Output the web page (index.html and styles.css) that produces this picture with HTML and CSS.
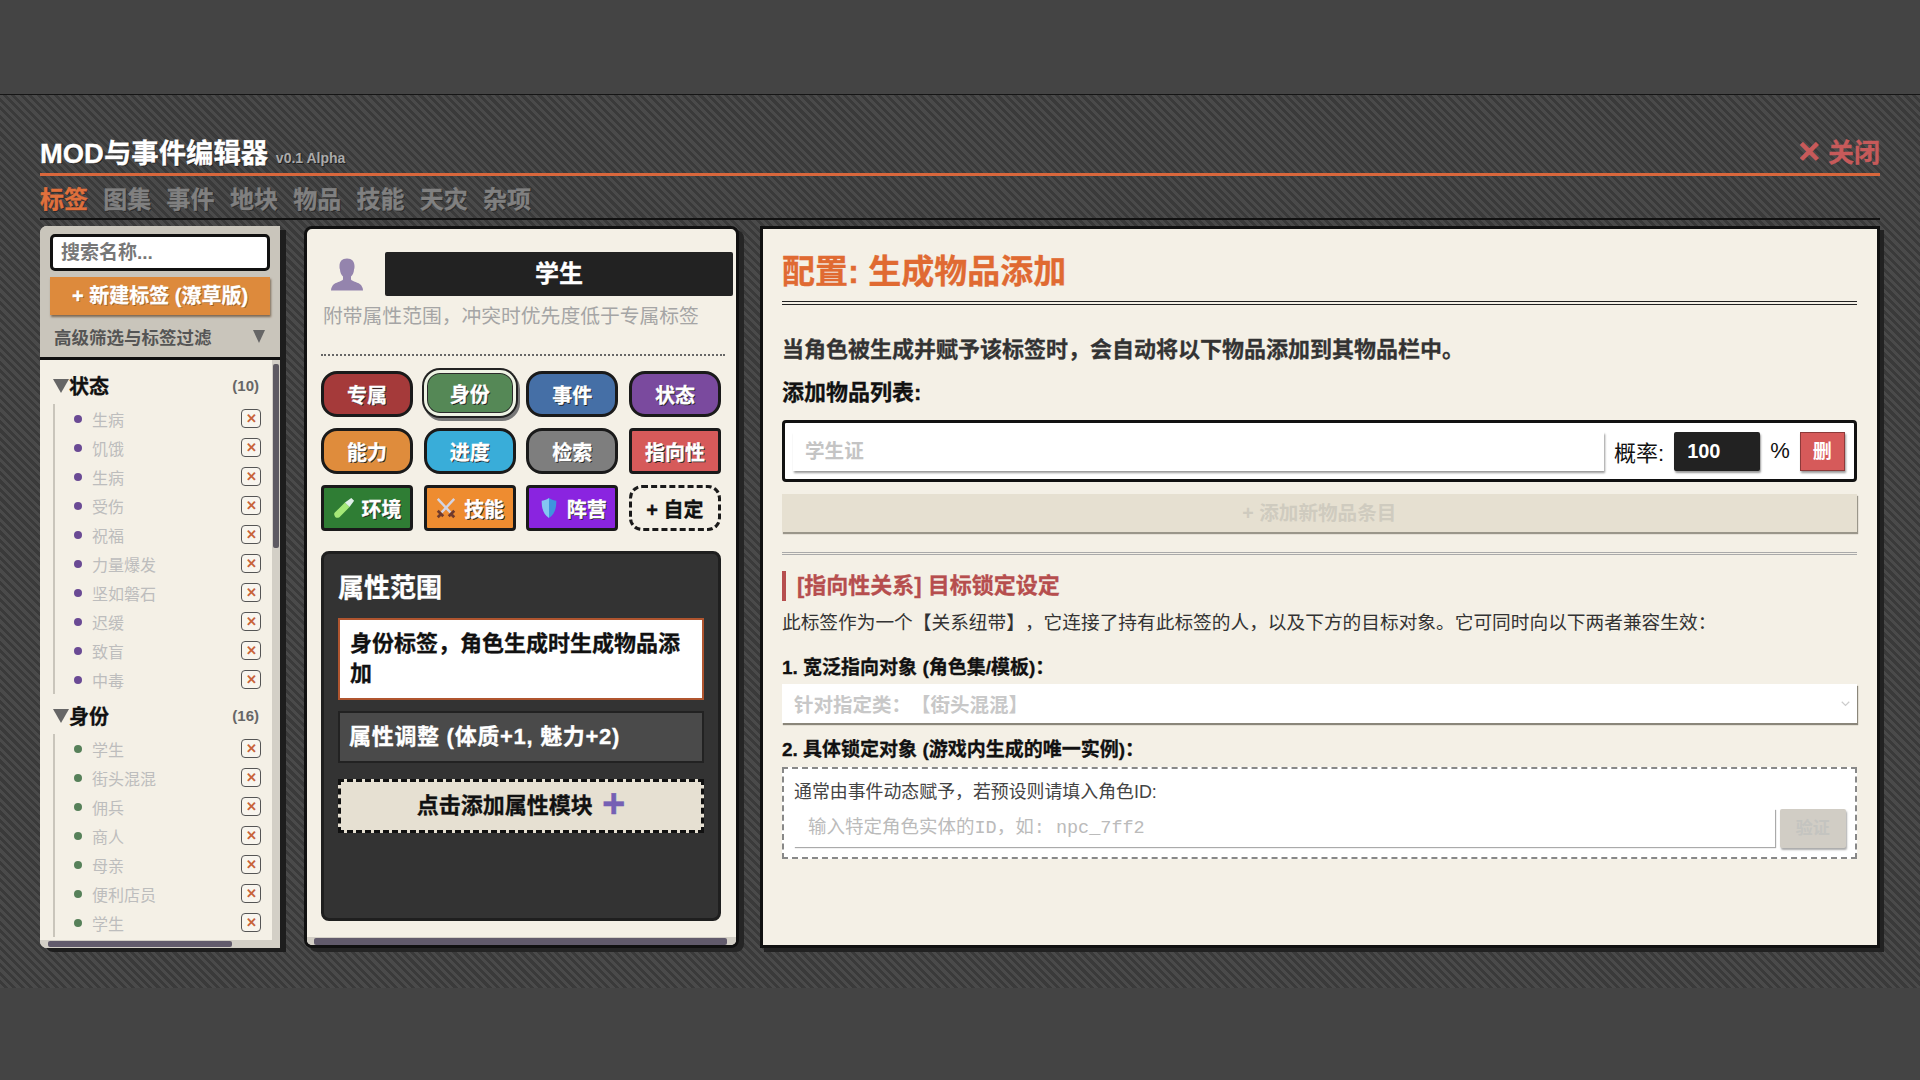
FILE: index.html
```html
<!DOCTYPE html>
<html lang="zh-CN">
<head>
<meta charset="UTF-8">
<title>MOD与事件编辑器</title>
<link rel="stylesheet" href="styles.css">
</head>
<body>

<div class="band-top"></div>

<div class="editor">
  <header class="editor-head">
    <h1 class="editor-title">MOD与事件编辑器 <small>v0.1 Alpha</small></h1>
    <span class="btn-exit"><span class="exit-x">✕</span> 关闭</span>
  </header>

  <nav class="tabs">
    <span class="tab tab-on">标签</span>
    <span class="tab">图集</span>
    <span class="tab">事件</span>
    <span class="tab">地块</span>
    <span class="tab">物品</span>
    <span class="tab">技能</span>
    <span class="tab">天灾</span>
    <span class="tab">杂项</span>
  </nav>

  <div class="workspace">

    <!-- tag list -->
    <aside class="side">
      <div class="side-top">
        <div class="search">搜索名称...</div>
        <div class="btn-new">+ 新建标签 (潦草版)</div>
        <div class="filter"><span>高级筛选与标签过滤</span><i class="filter-arrow"></i></div>
      </div>
      <div class="side-list">
        <div class="group-head"><i class="tri"></i><b>状态</b><em>(10)</em></div>
        <ul class="group dot-purple">
          <li><i></i><span>生病</span><u>✕</u></li>
          <li><i></i><span>饥饿</span><u>✕</u></li>
          <li><i></i><span>生病</span><u>✕</u></li>
          <li><i></i><span>受伤</span><u>✕</u></li>
          <li><i></i><span>祝福</span><u>✕</u></li>
          <li><i></i><span>力量爆发</span><u>✕</u></li>
          <li><i></i><span>坚如磐石</span><u>✕</u></li>
          <li><i></i><span>迟缓</span><u>✕</u></li>
          <li><i></i><span>致盲</span><u>✕</u></li>
          <li><i></i><span>中毒</span><u>✕</u></li>
        </ul>
        <div class="group-head"><i class="tri"></i><b>身份</b><em>(16)</em></div>
        <ul class="group dot-green">
          <li><i></i><span>学生</span><u>✕</u></li>
          <li><i></i><span>街头混混</span><u>✕</u></li>
          <li><i></i><span>佣兵</span><u>✕</u></li>
          <li><i></i><span>商人</span><u>✕</u></li>
          <li><i></i><span>母亲</span><u>✕</u></li>
          <li><i></i><span>便利店员</span><u>✕</u></li>
          <li><i></i><span>学生</span><u>✕</u></li>
        </ul>
        <div class="bar-v"><i></i></div>
        <div class="bar-h"><i></i></div>
      </div>
    </aside>

    <!-- tag detail -->
    <section class="mid">
      <div class="name-row">
        <svg class="avatar" viewBox="0 0 32 32"><path fill="#9484ad" d="M16 0c-5 0-7.500 3-7.500 7.500 0 1.500 0 2.500.5 3.500 0 2.500 1 5 3 7v3c-1 2-8 3-10 5.500-1 1.500-2 3-2 5.500h32c0-2.500-1-4-2-5.500-2-2.500-9-3.500-10-5.500v-3c2-2 3-4.500 3-7 .5-1 .5-2 .5-3.500C23.500 3 21 0 16 0z"/></svg>
        <div class="name-box">学生</div>
      </div>
      <p class="name-desc">附带属性范围，冲突时优先度低于专属标签</p>
      <div class="dots"></div>

      <div class="types">
        <span class="type pill c-red">专属</span>
        <span class="type pill c-green type-on">身份</span>
        <span class="type pill c-blue">事件</span>
        <span class="type pill c-purple">状态</span>
        <span class="type pill c-orange">能力</span>
        <span class="type pill c-sky">进度</span>
        <span class="type pill c-gray">检索</span>
        <span class="type c-coral">指向性</span>
        <span class="type c-forest">
          <svg viewBox="0 0 24 24"><path fill="#a5e878" d="M2 17 13 6l5 5L7 22c-2 1-4 1-5-1s-1-3 0-4z"/><path fill="#e2f0ea" d="M13 6l7-5 3 3-5 7z"/></svg>
          环境
        </span>
        <span class="type c-amber">
          <svg viewBox="0 0 24 24"><path stroke="#d4d4e2" stroke-width="2.600" d="M21 2 7 17M3 2l14 15"/><path stroke="#6f3a2c" stroke-width="3" d="m3 15 6 6M15 21l6-6M6 19l-3 3M18 19l3 3"/></svg>
          技能
        </span>
        <span class="type c-violet">
          <svg viewBox="0 0 24 24"><path fill="#3f95de" d="M12 1c3 2 6 3 8 3 0 9-2 15-8 19z"/><path fill="#84c6f2" d="M12 1C9 3 6 4 4 4c0 9 2 15 8 19z"/></svg>
          阵营
        </span>
        <span class="type type-add">+ 自定</span>
      </div>

      <div class="attrs">
        <h3>属性范围</h3>
        <div class="attr attr-on">身份标签，角色生成时生成物品添加</div>
        <div class="attr">属性调整 (体质+1, 魅力+2)</div>
        <div class="attr-add">点击添加属性模块 <b>+</b></div>
      </div>
      <div class="bar-b"><i></i></div>
    </section>

    <!-- config -->
    <section class="config">
      <h2 class="config-title">配置: 生成物品添加</h2>
      <p class="config-lead">当角色被生成并赋予该标签时，会自动将以下物品添加到其物品栏中。</p>
      <div class="config-label">添加物品列表:</div>

      <div class="item-row">
        <div class="field item-name">学生证</div>
        <span class="item-text">概率:</span>
        <div class="item-num">100</div>
        <span class="item-text">%</span>
        <div class="btn-del">删</div>
      </div>
      <div class="btn-additem">+ 添加新物品条目</div>

      <div class="split"></div>

      <h4 class="rel-title">[指向性关系] 目标锁定设定</h4>
      <p class="rel-desc">此标签作为一个【关系纽带】，它连接了持有此标签的人，以及下方的目标对象。它可同时向以下两者兼容生效：</p>

      <div class="rel-label">1. 宽泛指向对象 (角色集/模板)：</div>
      <div class="rel-select">
        <span>针对指定类：【街头混混】</span>
        <svg viewBox="0 0 12 8"><path d="M1 1l5 5 5-5" fill="none" stroke="#ccc" stroke-width="1.600"/></svg>
      </div>

      <div class="rel-label">2. 具体锁定对象 (游戏内生成的唯一实例)：</div>
      <div class="rel-box">
        <div class="rel-hint">通常由事件动态赋予，若预设则请填入角色ID:</div>
        <div class="rel-input">
          <div class="field rel-id">输入特定角色实体的ID，如: npc_7ff2</div>
          <div class="btn-check">验证</div>
        </div>
      </div>
    </section>

  </div>
</div>

<div class="band-bottom"></div>

</body>
</html>
```

FILE: styles.css
```css
* {
  box-sizing: border-box;
}

body {
  margin: 0;
  width: 1920px;
  height: 1080px;
  overflow: hidden;
  display: flex;
  flex-direction: column;
  background: #444;
  font-family: "Liberation Sans", "Noto Sans CJK SC", sans-serif;
  text-spacing-trim: space-all;
}

/* the heavy bold of the headings and buttons */
.editor-title, .tab, .btn-exit, .btn-new, .type, .attrs h3, .attr, .attr-add,
.config-title, .config-lead, .config-label, .rel-title, .rel-label, .name-box, .group-head b {
  -webkit-text-stroke: 0.3px currentColor;
}

.band-top {
  height: 95px;
  background: #444;
  border-bottom: 1px solid #151515;
}
.band-bottom {
  height: 92px;
  background: #444;
}

.editor {
  height: 893px;
  padding: 36px 40px 0;
  background: repeating-linear-gradient(45deg, #4a4a4a 0 3px, #3a3a3a 3px 6px);
}

/* header */
.editor-head {
  height: 45px;
  padding-bottom: 3px;
  display: flex;
  justify-content: space-between;
  align-items: center;
  border-bottom: 3px solid #d9673c;
}
.editor-title {
  margin: 0;
  font-size: 27.4px;
  font-weight: bold;
  color: #fff;
  text-shadow: 1px 1px 0 #222;
}
.editor-title small {
  font-size: 14px;
  color: #aaa;
  -webkit-text-stroke: 0;
}
.btn-exit {
  font-size: 26px;
  font-weight: bold;
  color: #c75a5a;
}
.exit-x {
  font-size: 29px;
  line-height: 1;
}

.tabs {
  display: flex;
  gap: 15.3px;
  height: 44px;
  align-items: center;
  border-bottom: 2px solid #111;
}
.tab {
  font-size: 24px;
  font-weight: bold;
  color: #808080;
  text-shadow: 1px 1px 0 #2c2c2c;
}
.tab-on {
  color: #e0703c;
}

.workspace {
  display: flex;
  margin-top: 6px;
  height: 722px;
}

/* left list */
.side {
  width: 240px;
  flex: none;
  margin-right: 24px;
  display: flex;
  flex-direction: column;
  background: #f4f0e6;
  border-radius: 7px 0 0 7px;
  box-shadow: 6px 4px 0 #1d1d1d;
  overflow: hidden;
}
.side-top {
  height: 134px;
  padding: 8px 10px 0;
  background: #c9c5bb;
  border-bottom: 3px solid #111;
}
.search {
  height: 37px;
  padding: 0 8px;
  line-height: 31px;
  background: #fff;
  border: 3px solid #111;
  border-radius: 5px;
  font-size: 19px;
  font-weight: bold;
  color: #777;
}
.btn-new {
  height: 38px;
  margin-top: 6px;
  line-height: 38px;
  text-align: center;
  background: #dd8a3c;
  box-shadow: 1px 2px 2px #7d6a55;
  font-size: 20px;
  font-weight: bold;
  color: #fff;
  text-shadow: 1px 1px 0 #9c5f25;
}
.filter {
  display: flex;
  justify-content: space-between;
  align-items: center;
  height: 36px;
  margin-top: 3px;
  padding: 0 5px 0 4px;
  font-size: 17.5px;
  font-weight: bold;
  color: #555;
}
.filter-arrow {
  width: 0;
  height: 0;
  border-left: 6.5px solid transparent;
  border-right: 6.5px solid transparent;
  border-top: 13px solid #666;
}

.side-list {
  flex: 1;
  position: relative;
  overflow: hidden;
  padding: 7px 0 0 13px;
}
.group-head {
  width: 206px;
  height: 37px;
  display: flex;
  align-items: center;
}
.tri {
  width: 0;
  height: 0;
  border-left: 8px solid transparent;
  border-right: 8px solid transparent;
  border-top: 14px solid #666;
}
.group-head b {
  flex: 1;
  font-size: 20px;
  color: #111;
}
.group-head em {
  font-style: normal;
  font-weight: bold;
  font-size: 15px;
  color: #666;
}
.group {
  list-style: none;
  width: 208px;
  margin: 0 0 3px;
  padding: 0 0 0 19px;
  border-left: 2px solid #c9c5bb;
}
.group li {
  height: 29px;
  display: flex;
  align-items: center;
  font-size: 16px;
  color: #bdbdbd;
}
.group li i {
  width: 8px;
  height: 8px;
  border-radius: 50%;
  margin-right: 10px;
}
.dot-purple li i {
  background: #6a4a94;
}
.dot-green li i {
  background: #568059;
}
.group li span {
  flex: 1;
}
.group li u {
  width: 20px;
  height: 19px;
  line-height: 17px;
  text-align: center;
  text-decoration: none;
  font-size: 13px;
  font-weight: bold;
  color: #c8633a;
  background: #f8f5ee;
  border: 1px solid #555;
  border-radius: 4px;
}

/* scrollbars drawn over the panels */
.bar-v {
  position: absolute;
  top: 0;
  right: 0;
  bottom: 0;
  width: 8px;
  background: #d3cfc6;
}
.bar-v i {
  display: block;
  width: 6px;
  height: 184px;
  margin: 4px 0 0 1px;
  border-radius: 2px;
  background: #5e5a62;
}
.bar-h {
  position: absolute;
  left: 0;
  right: 8px;
  bottom: 0;
  height: 8px;
  background: #d3cfc6;
}
.bar-h i {
  display: block;
  width: 184px;
  height: 6px;
  margin: 1px 0 0 8px;
  border-radius: 2px;
  background: #625b6c;
}

/* middle */
.mid {
  position: relative;
  width: 435px;
  flex: none;
  margin-right: 21px;
  padding: 23px 0 0 14px;
  background: #f4f0e6;
  border: 3px solid #111;
  border-radius: 8px;
  box-shadow: 5px 4px 0 #252525;
  overflow: hidden;
}
.bar-b {
  position: absolute;
  left: 0;
  right: 0;
  bottom: 0;
  height: 8px;
  background: #d3cfc6;
}
.bar-b i {
  display: block;
  height: 7px;
  margin: 1px 9px 0 7px;
  border-radius: 2px;
  background: #625b6c;
}
.name-row {
  display: flex;
  align-items: center;
  gap: 22px;
  margin-bottom: 6px;
  padding-left: 10px;
}
.avatar {
  width: 32px;
  height: 33px;
  flex: none;
}
.name-box {
  width: 348px;
  height: 44px;
  line-height: 44px;
  text-align: center;
  background: #222;
  border-radius: 2px;
  font-size: 24px;
  font-weight: bold;
  color: #fff;
}
.name-desc {
  margin: 0 0 0 2px;
  font-size: 19.8px;
  line-height: 28px;
  color: #a5a5a5;
}
.dots {
  width: 404px;
  margin-top: 24px;
  border-top: 2px dotted #666;
}

.types {
  width: 400px;
  margin-top: 15px;
  display: grid;
  grid-template-columns: repeat(4, 1fr);
  gap: 11px 10.5px;
}
.type {
  height: 46px;
  display: flex;
  align-items: center;
  justify-content: center;
  gap: 7px;
  font-size: 20px;
  font-weight: bold;
  color: #fff;
  text-shadow: 1px 1px 0 #222;
  border: 3px solid #1a1a1a;
  border-radius: 4px;
}
.type svg {
  width: 22px;
  height: 22px;
  flex: none;
}
.pill {
  border-radius: 16px;
}
.type-on {
  border: 3px solid #eef3e4;
  box-shadow: 0 0 0 2px #222, inset 0 0 0 1px #2a2a2a, 2px 3px 0 2px #777;
  transform: translateY(-1px);
}
.c-red { background: #a53a3a; }
.c-green { background: #558856; }
.c-blue { background: #456fa6; }
.c-purple { background: #7a4a9e; }
.c-orange { background: #df8c3c; }
.c-sky { background: #39add9; }
.c-gray { background: #7e7e7e; }
.c-coral { background: #d65a5a; }
.c-forest { background: #2f7d34; }
.c-amber { background: #ee8c30; }
.c-violet { background: #8a24e0; }
.type-add {
  color: #111;
  text-shadow: none;
  border: 3px dashed #1a1a1a;
  border-radius: 13px;
}

.attrs {
  width: 400px;
  height: 370px;
  margin-top: 20px;
  padding: 0 14px;
  background: #333;
  border: 3px solid #1f1f1f;
  border-radius: 8px;
}
.attrs h3 {
  margin: 15px 0 11px;
  font-size: 26px;
  line-height: 38px;
  color: #fff;
}
.attr {
  margin-bottom: 11px;
  padding: 9px 9px;
  line-height: 30px;
  letter-spacing: 0.7px;
  background: #4a4a4a;
  border: 2px solid #222;
  font-size: 22px;
  font-weight: bold;
  color: #fff;
}
.attr-on {
  padding: 9px 10px;
  letter-spacing: 0;
  background: #fff;
  border-color: #b0552f;
  color: #111;
}
.attr-add {
  height: 54px;
  margin-top: 16px;
  line-height: 48px;
  text-align: center;
  background: #e6e0d2;
  border: 3px dashed #111;
  font-size: 22px;
  font-weight: bold;
  color: #111;
}
.attr-add b {
  margin-left: 3px;
  font-size: 40px;
  line-height: 1;
  vertical-align: -4px;
  color: #7560b4;
}

/* right */
.config {
  flex: 1;
  margin-right: 1px;
  padding: 20px 20px 0 19px;
  background: #f4f0e6;
  border: 3px solid #111;
  box-shadow: 4px 4px 0 #222;
}
.config-title {
  margin: 0;
  height: 56px;
  line-height: 46px;
  font-size: 33px;
  color: #e06a32;
  border-bottom: 4px double #222;
}
.config-lead {
  margin: 30px 0 0;
  font-size: 22px;
  font-weight: bold;
  line-height: 30px;
  color: #333;
}
.config-label {
  margin-top: 13px;
  font-size: 22px;
  font-weight: bold;
  line-height: 30px;
  color: #111;
}
.item-row {
  height: 62px;
  margin-top: 12px;
  padding: 0 9px 0 8px;
  display: flex;
  align-items: center;
  background: #fff;
  border: 3px solid #111;
  border-radius: 4px;
}
.field {
  background: #fff;
  box-shadow: 1px 2px 2px #999;
}
.item-name {
  width: 811px;
  height: 39px;
  line-height: 39px;
  padding-left: 12px;
  font-size: 19.6px;
  font-weight: bold;
  color: #c4c4c4;
}
.item-text {
  margin: 0 10px;
  flex: none;
  white-space: nowrap;
  font-size: 22px;
  color: #111;
}
.item-num {
  width: 86px;
  flex: none;
  height: 39px;
  line-height: 39px;
  padding-left: 13px;
  background: #222;
  border-radius: 2px;
  box-shadow: 1px 2px 2px #999;
  font-size: 20px;
  font-weight: bold;
  color: #fff;
}
.btn-del {
  width: 45px;
  flex: none;
  height: 39px;
  line-height: 37px;
  text-align: center;
  background: #d65a5a;
  border: 1px solid #8d3a3a;
  box-shadow: 1px 2px 2px #999;
  font-size: 19px;
  font-weight: bold;
  color: #fff;
}
.btn-additem {
  height: 38px;
  margin-top: 12px;
  line-height: 38px;
  text-align: center;
  background: #e6e0d1;
  box-shadow: 1px 2px 1px #9a968a;
  font-size: 19.6px;
  font-weight: bold;
  color: #cfcbbf;
}
.split {
  margin-top: 20px;
  border-top: 3px double #aaa;
}
.rel-title {
  margin: 16px 0 0;
  height: 30px;
  line-height: 30px;
  padding-left: 11px;
  border-left: 4px solid #b64e4e;
  font-size: 22px;
  color: #b64e4e;
}
.rel-desc {
  margin: 7px 0 0;
  font-size: 18.7px;
  line-height: 30px;
  color: #333;
}
.rel-label {
  margin-top: 17px;
  height: 26px;
  line-height: 26px;
  font-size: 19px;
  font-weight: bold;
  color: #111;
}
.rel-select {
  height: 39px;
  margin-top: 3px;
  padding: 0 7px 0 12px;
  display: flex;
  justify-content: space-between;
  align-items: center;
  background: #fff;
  box-shadow: 1px 2px 1px #8a867a;
  font-size: 19.5px;
  font-weight: bold;
  color: #c8c8c8;
}
.rel-select svg {
  width: 9px;
  height: 6px;
}
.rel-select + .rel-label {
  margin-top: 14px;
}
.rel-box {
  height: 92px;
  margin-top: 4px;
  padding: 10px 9px 0 10px;
  background: #fff;
  border: 2px dashed #888;
}
.rel-hint {
  height: 26px;
  line-height: 26px;
  font-size: 17.9px;
  color: #444;
}
.rel-input {
  display: flex;
  gap: 5px;
  margin-top: 4px;
}
.rel-id {
  flex: 1;
  height: 38px;
  line-height: 40px;
  padding-left: 14px;
  box-shadow: 1px 1px 1px #aaa;
  font-family: "Liberation Mono", "Noto Sans CJK SC", monospace;
  font-size: 18.5px;
  color: #bbb;
}
.btn-check {
  width: 66px;
  height: 39px;
  line-height: 39px;
  text-align: center;
  background: #d1cdc5;
  border-radius: 2px;
  box-shadow: 1px 2px 2px #aaa;
  font-size: 17px;
  font-weight: bold;
  color: #c4c4c0;
}
```
